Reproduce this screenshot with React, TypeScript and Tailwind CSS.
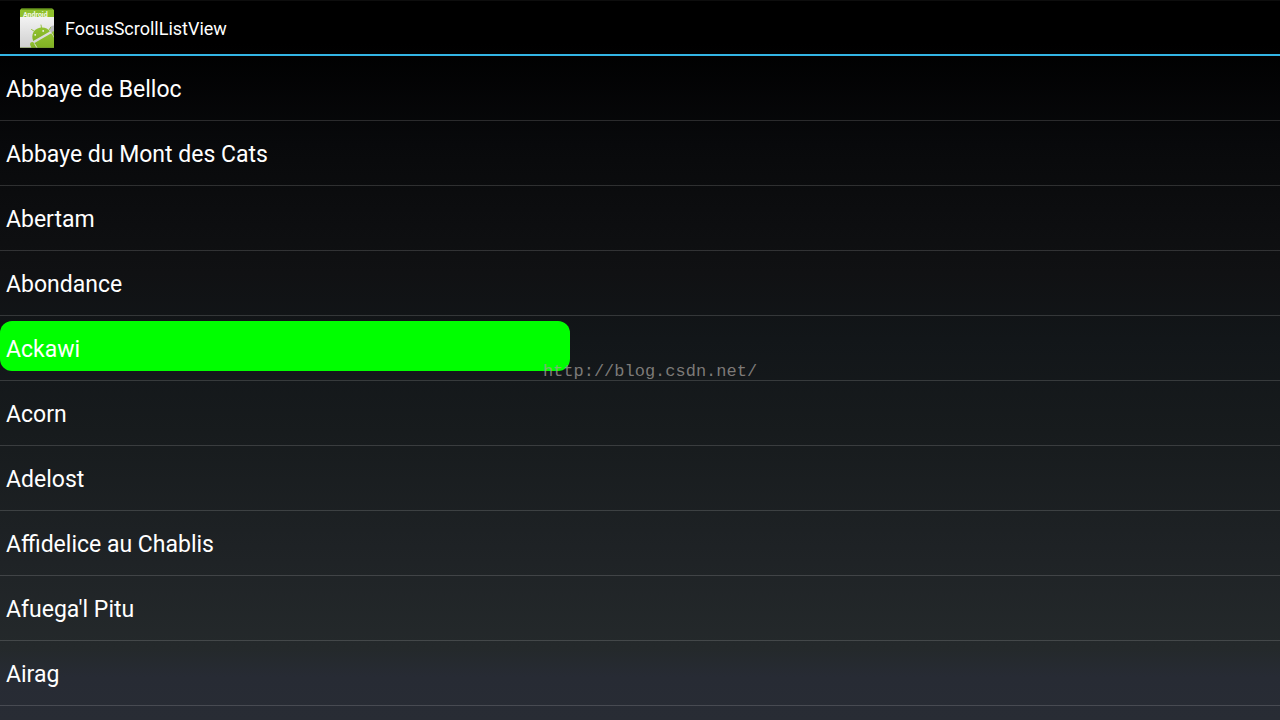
const cheeses = [
  "Abbaye de Belloc",
  "Abbaye du Mont des Cats",
  "Abertam",
  "Abondance",
  "Ackawi",
  "Acorn",
  "Adelost",
  "Affidelice au Chablis",
  "Afuega'l Pitu",
  "Airag",
]

const focused = "Ackawi"

const AppIcon = () => (
  <svg className="w-[34px] h-10" viewBox="0 0 34 40" aria-hidden="true">
    <defs>
      <linearGradient id="paper" x1="0" y1="0" x2="0" y2="1">
        <stop offset="0" stopColor="#fbfbfb" />
        <stop offset="1" stopColor="#cfcfcf" />
      </linearGradient>
      <linearGradient id="robot" x1="0" y1="0" x2="0" y2="1">
        <stop offset="0" stopColor="#93c232" />
        <stop offset="1" stopColor="#80b122" />
      </linearGradient>
      <clipPath id="page">
        <rect width="34" height="40" />
      </clipPath>
    </defs>
    <g clipPath="url(#page)">
      <path d="M0 2h34v38H0z" fill="url(#paper)" />
      <path d="M1.5 0.500h30.500l2 1.500V9H0V2z" fill="#8fc02c" />
      <path d="M1.500 1h31" stroke="#4f7d12" strokeWidth="1" />
      <text x="3" y="9" fontSize="7" fontWeight="700" fontFamily="Roboto, sans-serif" fill="#f2f8e4">
        Android
      </text>
      <circle cx="34" cy="21.500" r="4" fill="#b9babb" />
      <path d="M21 17l0.800 4M11.500 21.500l4 2.500M30.500 19.500l-2 3.500" stroke="#8fbe30" strokeWidth="0.900" strokeLinecap="round" />
      {/* head */}
      <path d="M13.200 33C10.800 27 13.500 21.500 19 20C24 18.800 27.800 20.500 29.800 23.500z" fill="url(#robot)" />
      <circle cx="15.200" cy="26.800" r="0.900" fill="#f4f4f4" />
      <circle cx="23.200" cy="22.900" r="0.900" fill="#f4f4f4" />
      {/* body and arms */}
      <path d="M14.500 35L31.300 25.200L34 29.500V40H17z" fill="url(#robot)" />
      <path d="M10.200 37c-0.800-3 2.800-4 4-1.500L16.500 40h-5z" fill="url(#robot)" />
      <path d="M32 25c0-1.800 1.500-2 2-1.500v5z" fill="url(#robot)" />
      <path d="M14.800 36l2.500 4" stroke="#dfe5d2" strokeWidth="0.700" />
      <path d="M0 39.500h34" stroke="#6f8a38" strokeWidth="1" opacity="0.500" />
    </g>
  </svg>
)

const App = () => {
  return (
    <div className="relative flex flex-col min-h-screen overflow-hidden text-white font-['Roboto',sans-serif] bg-[linear-gradient(to_bottom,#000000_0%,#000000_6%,#08090b_20%,#101113_38%,#121619_47%,#171b1d_60%,#1f2326_78%,#24292b_90%,#272b34_94%,#282c34_100%)]">
      <header className="flex items-center h-14 pl-5 gap-[11px] border-t border-t-[#0d0d0d] border-b-2 border-b-[#33b5e5]">
        <AppIcon />
        <h1 className="pt-0.5 text-[18px] leading-6">FocusScrollListView</h1>
      </header>

      <ul>
        {cheeses.map((cheese) => (
          <li key={cheese} className="relative h-[65px] border-b border-white/15">
            {/* focus highlight behind the row text */}
            {cheese === focused && (
              <div className="absolute left-0 top-[5px] w-[570px] h-[50px] rounded-xl bg-[#00ff00]"></div>
            )}
            <button type="button" className="relative flex items-center w-full h-full px-1.5 pt-1 text-left text-[23px] leading-7">
              {cheese}
            </button>
          </li>
        ))}
      </ul>

      {/* watermark */}
      <div className="absolute inset-0 flex items-center justify-center pl-5 pt-6 pointer-events-none">
        <span className="font-['Liberation_Mono',monospace] text-[17px] leading-5 text-[#a09c98]/75">http://blog.csdn.net/</span>
      </div>
    </div>
  )
}

export default App
